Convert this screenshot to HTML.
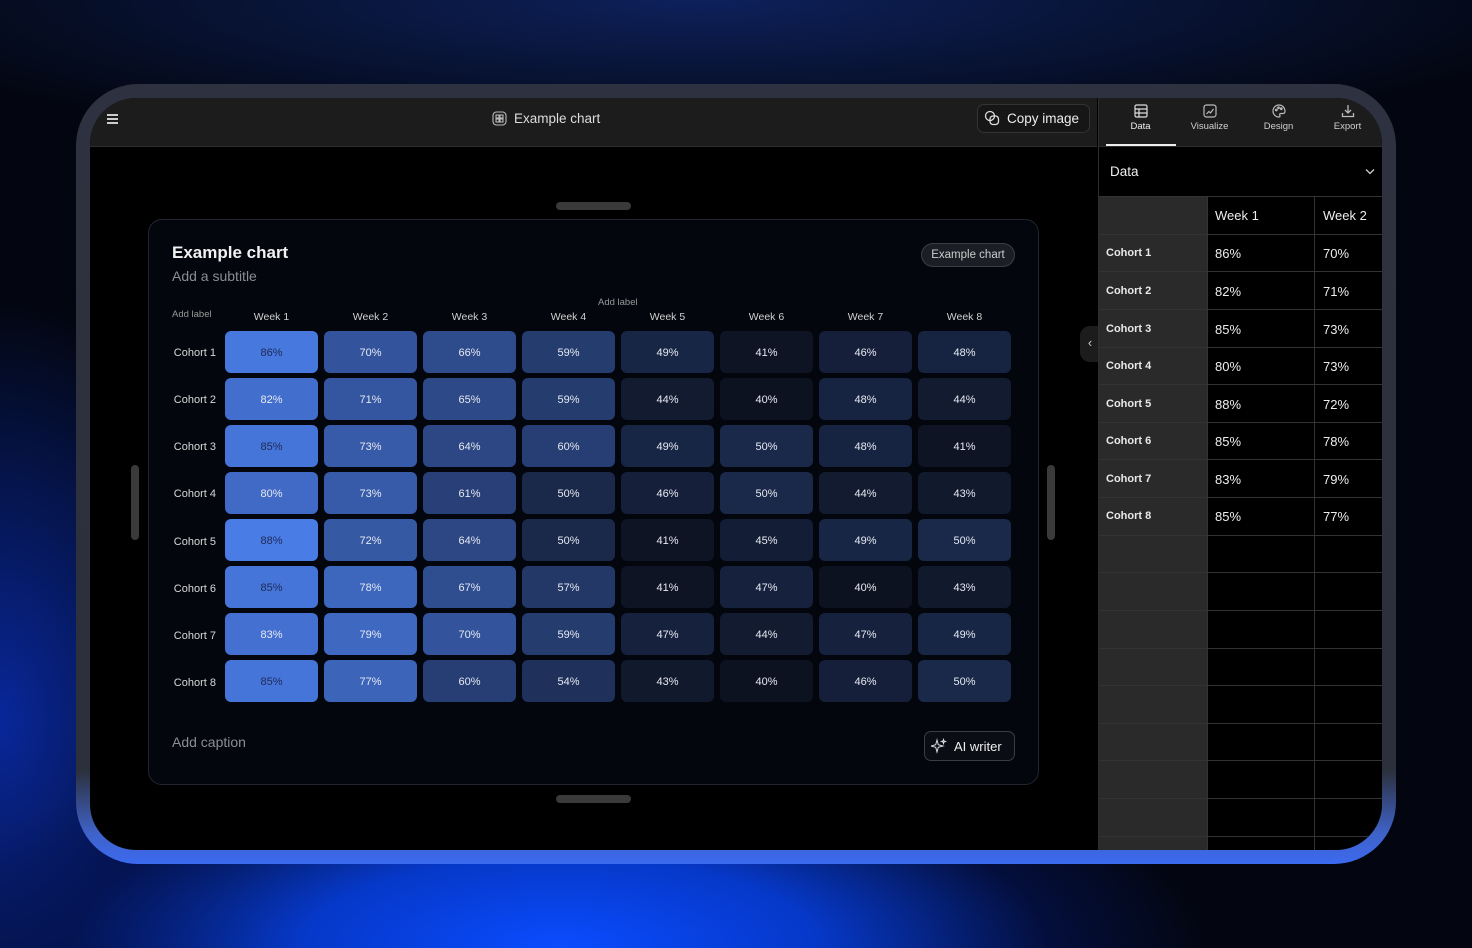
<!DOCTYPE html>
<html><head><meta charset="utf-8"><style>
*{margin:0;padding:0;box-sizing:border-box}
body{width:1472px;height:948px;overflow:hidden;font-family:"Liberation Sans",sans-serif;position:relative;
background:radial-gradient(ellipse 650px 230px at 560px 948px,#0a4cff 0%,#0638c8 40%,rgba(4,20,90,0.6) 75%,rgba(0,0,0,0) 100%),
radial-gradient(ellipse 260px 420px at 0px 720px,rgba(10,50,200,0.75),rgba(0,0,0,0) 100%),
radial-gradient(ellipse 900px 150px at 700px 0px,rgba(20,50,140,0.6),rgba(0,0,0,0) 100%),
#030610;}
.abs{position:absolute}
.bezel{left:76px;top:84px;width:1320px;height:780px;border-radius:62px;background:linear-gradient(180deg,#2e3240 0%,#2c303c 88%,#3f62c8 96%,#3c6af0 100%);}
.screen{left:90px;top:98px;width:1292px;height:752px;border-radius:46px;background:#000;overflow:hidden}
.hdr{left:0;top:0;width:1007px;height:49px;background:#1c1c1c;border-bottom:1px solid #2e2e2e}
.card{left:58px;top:121px;width:891px;height:566px;border:1px solid #222530;border-radius:14px;background:#04060d}
.cell{position:absolute;width:93px;height:42px;border-radius:6px;color:#e6e9f2;font-size:11px;text-align:center;line-height:44px}
.rl{position:absolute;font-size:11px;color:#d8d8d8;text-align:right;width:60px}
.wk{position:absolute;font-size:10.5px;color:#d0d0d0;width:93px;text-align:center}
.panel{left:1008px;top:0;width:284px;height:752px;background:#000;border-left:1px solid #2e2e2e}
.tab{position:absolute;top:0;width:69px;height:49px;text-align:center;font-size:9.5px;color:#cfcfcf}
.tab svg{display:block;margin:6px auto 3px}
.tr{position:absolute;left:0;width:284px;border-top:1px solid #333}
.tl{position:absolute;left:7px;font-size:11px;font-weight:bold;color:#e8e8e8}
.tv{position:absolute;font-size:13px;color:#eee}
</style></head><body>
<div class="abs bezel"></div>
<div class="abs screen">
 <div class="abs hdr">
  <div class="abs" style="left:17px;top:16px;width:11px">
   <div style="height:1.5px;background:#ccc;margin-bottom:2.5px"></div><div style="height:1.5px;background:#ccc;margin-bottom:2.5px"></div><div style="height:1.5px;background:#ccc"></div></div>
  <svg class="abs" style="left:402px;top:13px" width="15" height="15" viewBox="0 0 15 15" fill="none" stroke="#bbb" stroke-width="1.1"><rect x="1" y="1" width="13" height="13" rx="3.5"/><rect x="4" y="4" width="3" height="3"/><rect x="8" y="4" width="3" height="3"/><rect x="4" y="8" width="3" height="3"/><rect x="8" y="8" width="3" height="3"/></svg>
  <div class="abs" style="left:424px;top:13px;font-size:13.5px;color:#ddd">Example chart</div>
  <div class="abs" style="left:887px;top:6px;width:113px;height:29px;border:1px solid #333;border-radius:7px;background:#161616"></div>
  <svg class="abs" style="left:894px;top:12px" width="16" height="16" viewBox="0 0 16 16" fill="none" stroke="#ddd" stroke-width="1.3"><circle cx="6" cy="6" r="4.5"/><rect x="6" y="6" width="8.5" height="8.5" rx="3"/></svg>
  <div class="abs" style="left:917px;top:13px;font-size:13.5px;color:#eee">Copy image</div>
 </div>
 <div class="abs" style="left:466px;top:104px;width:75px;height:8px;border-radius:4px;background:#3a3a3a"></div>
 <div class="abs" style="left:466px;top:697px;width:75px;height:8px;border-radius:4px;background:#3a3a3a"></div>
 <div class="abs" style="left:41px;top:367px;width:8px;height:75px;border-radius:4px;background:#3a3a3a"></div>
 <div class="abs" style="left:957px;top:367px;width:8px;height:75px;border-radius:4px;background:#3a3a3a"></div>
 <div class="abs" style="left:990px;top:228px;width:20px;height:36px;border-radius:10px 0 0 10px;background:#1c1c1c;color:#ccc;font-size:13px;line-height:34px;text-align:center">‹</div>
 <div class="abs card">
  <div class="abs" style="left:23px;top:23px;font-size:17px;font-weight:bold;color:#f2f2f2">Example chart</div>
  <div class="abs" style="left:23px;top:48px;font-size:14px;color:#8a8d96">Add a subtitle</div>
  <div class="abs" style="left:772px;top:23px;width:94px;height:24px;border:1px solid #3a3d48;border-radius:12px;background:#1c1e26;font-size:11.5px;color:#ccc;text-align:center;line-height:22px">Example chart</div>
  <div class="abs" style="left:23px;top:89px;font-size:9.5px;color:#999">Add label</div>
  <div class="abs" style="left:449px;top:77px;font-size:9.5px;color:#999">Add label</div>
  <div class="abs" style="left:23px;top:514px;font-size:14px;color:#8a8d96">Add caption</div>
  <div class="abs" style="left:775px;top:511px;width:91px;height:30px;border:1px solid #3a3d48;border-radius:7px;background:#0b0d14"></div>
  <svg class="abs" style="left:782px;top:518px" width="16" height="16" viewBox="0 0 16 16" fill="none" stroke="#ddd" stroke-width="1"><path d="M6 2 L7.3 6.7 L12 8 L7.3 9.3 L6 14 L4.7 9.3 L0 8 L4.7 6.7Z"/><path d="M12.5 1.5 L13 3 L14.5 3.5 L13 4 L12.5 5.5 L12 4 L10.5 3.5 L12 3Z"/></svg>
  <div class="abs" style="left:805px;top:519px;font-size:13px;color:#eee">AI writer</div>
 </div>
 <div class="abs panel">
  <div class="abs" style="left:0;top:0;width:284px;height:49px;background:#1c1c1c;border-bottom:1px solid #2e2e2e"></div>
  <div class="tab" style="left:7px;color:#eee"><svg width="14" height="14" viewBox="0 0 14 14" fill="none" stroke="#ddd" stroke-width="1.2"><rect x="1" y="1" width="12" height="12" rx="1.5"/><path d="M1 5H13M1 9H13M5 5V13"/></svg>Data</div>
  <div class="abs" style="left:7px;top:46px;width:70px;height:2px;background:#eee"></div>
  <div class="tab" style="left:76px"><svg width="14" height="14" viewBox="0 0 14 14" fill="none" stroke="#bbb" stroke-width="1.2"><rect x="1" y="1" width="12" height="12" rx="2.5"/><path d="M3.5 10L6 7.5 7.5 9 10.5 5"/></svg>Visualize</div>
  <div class="tab" style="left:145px"><svg width="14" height="14" viewBox="0 0 14 14" fill="none" stroke="#bbb" stroke-width="1.2"><path d="M7 1a6 6 0 1 0 0 12c1 0 1.3-1 .8-1.8-.5-.8 0-1.7 1-1.7H11a2 2 0 0 0 2-2C13 3.6 10.3 1 7 1z"/><circle cx="4.3" cy="6" r=".8"/><circle cx="6.5" cy="3.8" r=".8"/><circle cx="9.3" cy="4.7" r=".8"/></svg>Design</div>
  <div class="tab" style="left:214px"><svg width="14" height="14" viewBox="0 0 14 14" fill="none" stroke="#bbb" stroke-width="1.3"><path d="M7 1V9M4 6L7 9 10 6M1.5 9V12.5H12.5V9"/></svg>Export</div>
  <div class="abs" style="left:11px;top:66px;font-size:13.5px;color:#eee">Data</div>
  <svg class="abs" style="left:266px;top:70px" width="10" height="7" viewBox="0 0 10 7" fill="none" stroke="#ccc" stroke-width="1.3"><path d="M1 1.5L5 5.5 9 1.5"/></svg>
  <div class="abs" style="left:0;top:98px;width:108px;height:654px;background:#2a2a2a;border-top:1px solid #333"></div>
  <div class="abs" style="left:108px;top:98px;width:1px;height:654px;background:#333"></div>
  <div class="abs" style="left:215px;top:98px;width:1px;height:654px;background:#333"></div>
  <div class="tr" style="top:98px"></div><div class="tr" style="top:136px"></div><div class="tr" style="top:173px"></div><div class="tr" style="top:211px"></div><div class="tr" style="top:249px"></div><div class="tr" style="top:286px"></div><div class="tr" style="top:324px"></div><div class="tr" style="top:361px"></div><div class="tr" style="top:399px"></div><div class="tr" style="top:437px"></div><div class="tr" style="top:474px"></div><div class="tr" style="top:512px"></div><div class="tr" style="top:550px"></div><div class="tr" style="top:587px"></div><div class="tr" style="top:625px"></div><div class="tr" style="top:662px"></div><div class="tr" style="top:700px"></div><div class="tr" style="top:738px"></div>
  <div class="tv" style="left:116px;top:110px">Week 1</div><div class="tv" style="left:224px;top:110px">Week 2</div>
  <div class="tl" style="top:149px">Cohort 1</div><div class="tv" style="left:116px;top:148px">86%</div><div class="tv" style="left:224px;top:148px">70%</div>
  <div class="tl" style="top:187px">Cohort 2</div><div class="tv" style="left:116px;top:186px">82%</div><div class="tv" style="left:224px;top:186px">71%</div>
  <div class="tl" style="top:225px">Cohort 3</div><div class="tv" style="left:116px;top:224px">85%</div><div class="tv" style="left:224px;top:224px">73%</div>
  <div class="tl" style="top:262px">Cohort 4</div><div class="tv" style="left:116px;top:261px">80%</div><div class="tv" style="left:224px;top:261px">73%</div>
  <div class="tl" style="top:300px">Cohort 5</div><div class="tv" style="left:116px;top:299px">88%</div><div class="tv" style="left:224px;top:299px">72%</div>
  <div class="tl" style="top:337px">Cohort 6</div><div class="tv" style="left:116px;top:336px">85%</div><div class="tv" style="left:224px;top:336px">78%</div>
  <div class="tl" style="top:375px">Cohort 7</div><div class="tv" style="left:116px;top:374px">83%</div><div class="tv" style="left:224px;top:374px">79%</div>
  <div class="tl" style="top:412px">Cohort 8</div><div class="tv" style="left:116px;top:411px">85%</div><div class="tv" style="left:224px;top:411px">77%</div>
 </div>
</div>
<div class="abs" style="left:0;top:0">
 <div class="wk" style="left:225px;top:311px">Week 1</div><div class="wk" style="left:324px;top:311px">Week 2</div><div class="wk" style="left:423px;top:311px">Week 3</div><div class="wk" style="left:522px;top:311px">Week 4</div><div class="wk" style="left:621px;top:311px">Week 5</div><div class="wk" style="left:720px;top:311px">Week 6</div><div class="wk" style="left:819px;top:311px">Week 7</div><div class="wk" style="left:918px;top:311px">Week 8</div>
 <div class="rl" style="left:156px;top:347px">Cohort 1</div><div class="rl" style="left:156px;top:394px">Cohort 2</div><div class="rl" style="left:156px;top:441px">Cohort 3</div><div class="rl" style="left:156px;top:488px">Cohort 4</div><div class="rl" style="left:156px;top:536px">Cohort 5</div><div class="rl" style="left:156px;top:583px">Cohort 6</div><div class="rl" style="left:156px;top:630px">Cohort 7</div><div class="rl" style="left:156px;top:677px">Cohort 8</div>

 <div class="cell" style="left:225px;top:331px;background:rgb(71,120,222);color:#1e2a55">86%</div>
 <div class="cell" style="left:324px;top:331px;background:rgb(51,84,156)">70%</div>
 <div class="cell" style="left:423px;top:331px;background:rgb(46,75,139)">66%</div>
 <div class="cell" style="left:522px;top:331px;background:rgb(37,60,110)">59%</div>
 <div class="cell" style="left:621px;top:331px;background:rgb(24,38,69)">49%</div>
 <div class="cell" style="left:720px;top:331px;background:rgb(14,20,36)">41%</div>
 <div class="cell" style="left:819px;top:331px;background:rgb(21,31,57)">46%</div>
 <div class="cell" style="left:918px;top:331px;background:rgb(23,36,65)">48%</div>

 <div class="cell" style="left:225px;top:378px;background:rgb(66,111,205)">82%</div>
 <div class="cell" style="left:324px;top:378px;background:rgb(52,86,160)">71%</div>
 <div class="cell" style="left:423px;top:378px;background:rgb(45,73,135)">65%</div>
 <div class="cell" style="left:522px;top:378px;background:rgb(37,60,110)">59%</div>
 <div class="cell" style="left:621px;top:378px;background:rgb(18,27,48)">44%</div>
 <div class="cell" style="left:720px;top:378px;background:rgb(13,18,32)">40%</div>
 <div class="cell" style="left:819px;top:378px;background:rgb(23,36,65)">48%</div>
 <div class="cell" style="left:918px;top:378px;background:rgb(18,27,48)">44%</div>

 <div class="cell" style="left:225px;top:425px;background:rgb(70,117,218);color:#1e2a55">85%</div>
 <div class="cell" style="left:324px;top:425px;background:rgb(55,91,168)">73%</div>
 <div class="cell" style="left:423px;top:425px;background:rgb(44,71,131)">64%</div>
 <div class="cell" style="left:522px;top:425px;background:rgb(38,62,115)">60%</div>
 <div class="cell" style="left:621px;top:425px;background:rgb(24,38,69)">49%</div>
 <div class="cell" style="left:720px;top:425px;background:rgb(26,40,73)">50%</div>
 <div class="cell" style="left:819px;top:425px;background:rgb(23,36,65)">48%</div>
 <div class="cell" style="left:918px;top:425px;background:rgb(14,20,36)">41%</div>

 <div class="cell" style="left:225px;top:472px;background:rgb(64,106,197)">80%</div>
 <div class="cell" style="left:324px;top:472px;background:rgb(55,91,168)">73%</div>
 <div class="cell" style="left:423px;top:472px;background:rgb(40,64,119)">61%</div>
 <div class="cell" style="left:522px;top:472px;background:rgb(26,40,73)">50%</div>
 <div class="cell" style="left:621px;top:472px;background:rgb(21,31,57)">46%</div>
 <div class="cell" style="left:720px;top:472px;background:rgb(26,40,73)">50%</div>
 <div class="cell" style="left:819px;top:472px;background:rgb(18,27,48)">44%</div>
 <div class="cell" style="left:918px;top:472px;background:rgb(17,25,44)">43%</div>

 <div class="cell" style="left:225px;top:519px;background:rgb(74,124,230);color:#1e2a55">88%</div>
 <div class="cell" style="left:324px;top:519px;background:rgb(54,89,164)">72%</div>
 <div class="cell" style="left:423px;top:519px;background:rgb(44,71,131)">64%</div>
 <div class="cell" style="left:522px;top:519px;background:rgb(26,40,73)">50%</div>
 <div class="cell" style="left:621px;top:519px;background:rgb(14,20,36)">41%</div>
 <div class="cell" style="left:720px;top:519px;background:rgb(19,29,53)">45%</div>
 <div class="cell" style="left:819px;top:519px;background:rgb(24,38,69)">49%</div>
 <div class="cell" style="left:918px;top:519px;background:rgb(26,40,73)">50%</div>

 <div class="cell" style="left:225px;top:566px;background:rgb(70,117,218);color:#1e2a55">85%</div>
 <div class="cell" style="left:324px;top:566px;background:rgb(61,102,189)">78%</div>
 <div class="cell" style="left:423px;top:566px;background:rgb(47,78,143)">67%</div>
 <div class="cell" style="left:522px;top:566px;background:rgb(35,56,102)">57%</div>
 <div class="cell" style="left:621px;top:566px;background:rgb(14,20,36)">41%</div>
 <div class="cell" style="left:720px;top:566px;background:rgb(22,33,61)">47%</div>
 <div class="cell" style="left:819px;top:566px;background:rgb(13,18,32)">40%</div>
 <div class="cell" style="left:918px;top:566px;background:rgb(17,25,44)">43%</div>

 <div class="cell" style="left:225px;top:613px;background:rgb(68,113,209)">83%</div>
 <div class="cell" style="left:324px;top:613px;background:rgb(63,104,193)">79%</div>
 <div class="cell" style="left:423px;top:613px;background:rgb(51,84,156)">70%</div>
 <div class="cell" style="left:522px;top:613px;background:rgb(37,60,110)">59%</div>
 <div class="cell" style="left:621px;top:613px;background:rgb(22,33,61)">47%</div>
 <div class="cell" style="left:720px;top:613px;background:rgb(18,27,48)">44%</div>
 <div class="cell" style="left:819px;top:613px;background:rgb(22,33,61)">47%</div>
 <div class="cell" style="left:918px;top:613px;background:rgb(24,38,69)">49%</div>

 <div class="cell" style="left:225px;top:660px;background:rgb(70,117,218);color:#1e2a55">85%</div>
 <div class="cell" style="left:324px;top:660px;background:rgb(60,100,185)">77%</div>
 <div class="cell" style="left:423px;top:660px;background:rgb(38,62,115)">60%</div>
 <div class="cell" style="left:522px;top:660px;background:rgb(31,49,90)">54%</div>
 <div class="cell" style="left:621px;top:660px;background:rgb(17,25,44)">43%</div>
 <div class="cell" style="left:720px;top:660px;background:rgb(13,18,32)">40%</div>
 <div class="cell" style="left:819px;top:660px;background:rgb(21,31,57)">46%</div>
 <div class="cell" style="left:918px;top:660px;background:rgb(26,40,73)">50%</div>
</div>
</body></html>
